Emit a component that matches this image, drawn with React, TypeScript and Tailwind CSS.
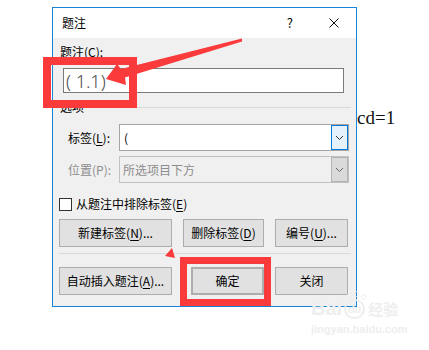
import type { ReactNode } from "react";

function U({ children }: { children: ReactNode }) {
  return <span className="underline decoration-1 underline-offset-[2px]">{children}</span>;
}

function Chevron({ color = "#333" }: { color?: string }) {
  return (
    <svg width="9" height="6" viewBox="0 0 9 6" fill="none">
      <path d="M1 1l3.5 3.5L8 1" stroke={color} strokeWidth="1" />
    </svg>
  );
}

function Btn({ children, className = "" }: { children: ReactNode; className?: string }) {
  return (
    <div
      className={`flex h-full items-center justify-center border border-[#adadad] bg-[#e1e1e1] ${className}`}
    >
      {children}
    </div>
  );
}

export default function App() {
  return (
    <div className="relative h-[350px] w-[429px] overflow-hidden bg-white font-['Noto_Sans_CJK_SC',sans-serif] text-[12px] leading-[16px] text-black">
      {/* document text behind the dialog */}
      <div className="absolute left-[357px] top-[106px] font-['Liberation_Serif',serif] text-[19px] leading-[24px] text-[#111]">
        cd=1
      </div>

      <div className="relative ml-[52px] mt-[7px] flex h-[300px] w-[305px] flex-col border border-[#1883d7] bg-[#f0f0f0]">
        {/* title bar */}
        <div className="flex h-[30px] items-center bg-white pl-[9px] pr-[17px]">
          <span>题注</span>
          <span className="ml-auto text-[13px]">?</span>
          <svg className="ml-[36px]" width="10" height="10" viewBox="0 0 10 10">
            <path d="M0.5 0.5l9 9M9.5 0.5l-9 9" stroke="#111" strokeWidth="1" />
          </svg>
        </div>

        <div className="flex flex-col">
          <div className="mt-[6px] pl-[7px]">
            题注(<U>C</U>):
          </div>
          <div className="ml-[10px] mt-[8px] flex h-[25px] w-[281px] items-center border border-[#7a7a7a] bg-white pl-[2px] font-['Noto_Sans',sans-serif] text-[18px] font-light text-[#4a4a4a]">
            ( 1.1)
          </div>

          <div className="mt-[6px] flex h-[16px] items-center pl-[7px] pr-[5px]">
            <span>选项</span>
            <div className="ml-[6px] h-px flex-1 bg-[#d9d9d9]" />
          </div>

          <div className="mt-[9px] flex h-[27px] items-center pl-[15px]">
            <span className="w-[51px]">
              标签(<U>L</U>):
            </span>
            <div className="flex h-full w-[230px] items-center border border-[#a5a5a5] bg-white pl-[4px]">
              <span>(</span>
              <div className="ml-auto flex h-full w-[17px] items-center justify-center border border-[#0078d7] bg-[#e5f1fb]">
                <Chevron />
              </div>
            </div>
          </div>

          <div className="mt-[5px] flex h-[27px] items-center pl-[15px] text-[#8d8d8d]">
            <span className="w-[51px]">位置(P):</span>
            <div className="flex h-full w-[230px] items-center border border-[#c2c2c2] bg-[#f0f0f0] pl-[3px]">
              <span>所选项目下方</span>
              <div className="ml-auto flex h-full w-[17px] items-center justify-center border border-[#b3b3b3] bg-[#dadada]">
                <Chevron color="#666" />
              </div>
            </div>
          </div>

          <div className="mt-[13px] flex h-[16px] items-center pl-[6px]">
            <div className="h-[13px] w-[13px] border border-[#333] bg-white" />
            <span className="ml-[4px]">
              从题注中排除标签(<U>E</U>)
            </span>
          </div>

          <div className="mt-[7px] flex h-[28px] gap-[11px] pl-[6px]">
            <Btn className="w-[113px]">
              新建标签(<U>N</U>)...
            </Btn>
            <Btn className="w-[81px]">
              删除标签(<U>D</U>)
            </Btn>
            <Btn className="w-[73px]">
              编号(<U>U</U>)...
            </Btn>
          </div>

          <div className="ml-[6px] mr-[5px] mt-[6px] h-px bg-[#d9d9d9]" />

          <div className="mt-[13px] flex h-[28px] pl-[6px]">
            <Btn className="w-[113px]">
              自动插入题注(<U>A</U>)...
            </Btn>
            <Btn className="ml-[19px] w-[73px] border-2 border-[#0078d7]">确定</Btn>
            <Btn className="ml-[11px] w-[73px]">关闭</Btn>
          </div>
        </div>
      </div>

      {/* annotations */}
      <div className="absolute left-[43px] top-[57px] h-[51px] w-[94px] border-[8px] border-[#fb3a3b]" />
      <div className="absolute left-[180px] top-[257px] h-[49px] w-[91px] border-[7px] border-[#fb3a3b]" />
      <svg className="pointer-events-none absolute left-0 top-0" width="429" height="350" viewBox="0 0 429 350">
        <polygon
          points="106,79 117,64 121,69 242,38.5 242,41.5 125,77.5 126,85"
          fill="#fb3a3b"
        />
        <polygon points="165,256 172,248 175,258" fill="#fb3a3b" />
      </svg>

      {/* watermark */}
      <div className="pointer-events-none absolute left-[311px] top-[297px] flex flex-col text-[#eeeeee]">
        <div className="flex items-end">
          <span className="font-['Liberation_Sans',sans-serif] text-[20px] font-bold leading-[22px]">Bai</span>
          <span className="relative ml-[2px] flex h-[20px] w-[21px] items-center justify-center rounded-full border-2 border-[#eeeeee] font-['Liberation_Sans',sans-serif] text-[11px] font-bold leading-none">
            du
            <span className="absolute -top-[8px] left-[1px] h-[6px] w-[5px] rounded-full border border-[#eeeeee]" />
            <span className="absolute -top-[10px] left-[8px] h-[6px] w-[5px] rounded-full border border-[#eeeeee]" />
            <span className="absolute -top-[7px] left-[15px] h-[6px] w-[5px] rounded-full border border-[#eeeeee]" />
          </span>
          <span className="ml-[3px] text-[15px] font-bold leading-[20px]">经验</span>
        </div>
        <span className="mt-[4px] font-['Liberation_Sans',sans-serif] text-[11px] font-bold leading-[13px]">
          jingyan.baidu.com
        </span>
      </div>
    </div>
  );
}
